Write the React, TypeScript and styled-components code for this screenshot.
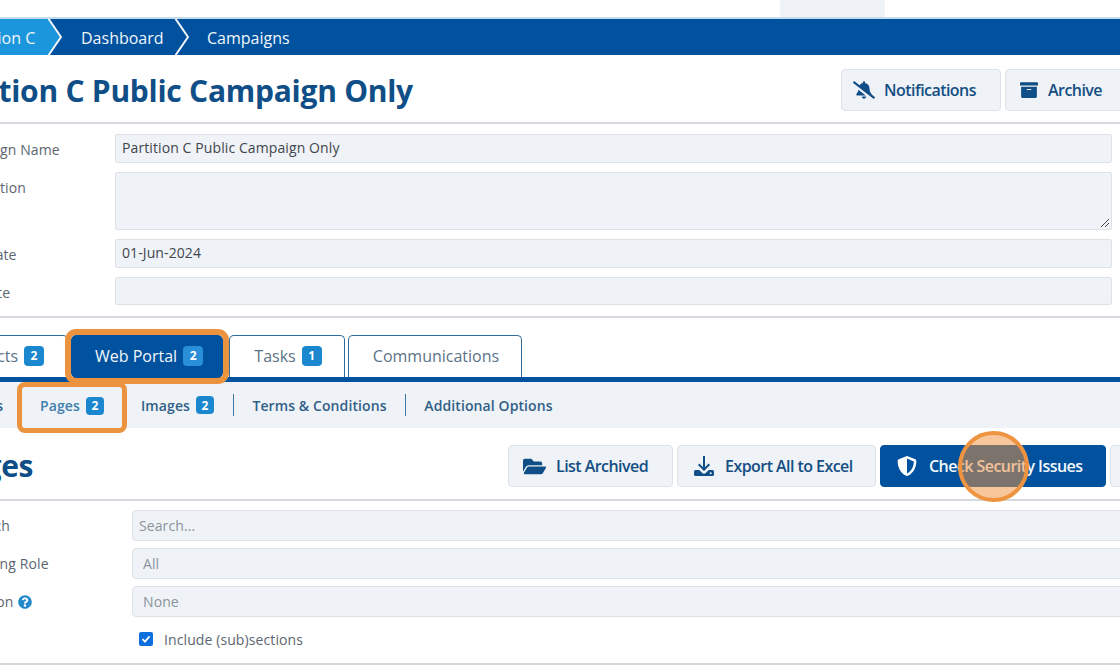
import React from 'react';
import styled, { createGlobalStyle } from 'styled-components';
import { FaArchive, FaBellSlash, FaFolderOpen, FaQuestionCircle, FaShieldAlt } from 'react-icons/fa';

const GlobalStyle = createGlobalStyle`
  html, body {
    margin: 0;
    padding: 0;
    background: #fff;
    overflow: hidden;
  }
  body {
    font-family: 'Open Sans', 'Liberation Sans', sans-serif;
    font-size: 14px;
    color: #495057;
  }
`;

const Viewport = styled.div`
  position: relative;
  width: 1120px;
  height: 668px;
  overflow: hidden;
`;

// the screenshot is scrolled sideways, so everything starts left of the window
const Page = styled.div`
  width: 1208px;
  margin-left: -73px;
`;

const TopBar = styled.div`
  height: 17px;
  padding-left: 853px;
`;

const TopBlock = styled.div`
  width: 105px;
  height: 17px;
  background: #eff2f6;
`;

const Breadcrumb = styled.nav`
  display: flex;
  align-items: stretch;
  height: 36px;
  border-top: 2px solid #c5dcec;
  background: #00529f;
`;

const Crumb = styled.span<{ $active?: boolean; $width: number; $inset: number }>`
  display: flex;
  align-items: center;
  width: ${(p) => p.$width}px;
  padding: 1px 0 0 ${(p) => p.$inset}px;
  box-sizing: border-box;
  background: ${(p) => (p.$active ? '#1b95dc' : 'transparent')};
  color: #f1f6fb;
  font-size: 16px;
  white-space: nowrap;
`;

const Chevron = styled.svg`
  display: block;
  flex: none;
  width: 14px;
  height: 36px;
`;

const PageHead = styled.div<{ $height: number }>`
  display: flex;
  align-items: flex-start;
  justify-content: space-between;
  height: ${(p) => p.$height}px;
  box-sizing: border-box;
  border-bottom: 2px solid #d5d9dd;
`;

const Title = styled.h1<{ $top: number; $left?: number }>`
  margin: ${(p) => p.$top}px 0 0 ${(p) => p.$left ?? 0}px;
  font-size: 30px;
  line-height: 38px;
  font-weight: 700;
  color: #0f4e86;
  letter-spacing: -0.26px;
  white-space: nowrap;
`;

const Actions = styled.div<{ $top: number }>`
  display: flex;
  gap: 4px;
  margin-top: ${(p) => p.$top}px;
`;

const ActionButton = styled.button<{ $primary?: boolean; $width: number; $pad?: number; $gap?: number }>`
  display: flex;
  align-items: center;
  gap: ${(p) => p.$gap ?? 10}px;
  width: ${(p) => p.$width}px;
  height: 42px;
  padding: 0 0 0 ${(p) => p.$pad ?? 14}px;
  box-sizing: border-box;
  border: 1px solid ${(p) => (p.$primary ? '#00529f' : '#dde2e8')};
  border-radius: 4px;
  background: ${(p) => (p.$primary ? '#00529f' : '#eff2f6')};
  color: ${(p) => (p.$primary ? '#f4f7fb' : '#144e84')};
  font-family: inherit;
  font-size: 16px;
  font-weight: 600;
  letter-spacing: -0.55px;
  white-space: nowrap;
  svg {
    flex: none;
    color: ${(p) => (p.$primary ? '#fff' : '#0f4e86')};
  }
`;

const Form = styled.div<{ $labelWidth: number; $right: number; $rowGap: number; $inset: number; $top: number }>`
  display: grid;
  grid-template-columns: ${(p) => p.$labelWidth}px ${(p) => p.$right}px;
  row-gap: ${(p) => p.$rowGap}px;
  align-items: start;
  padding-left: ${(p) => p.$inset}px;
  margin-top: ${(p) => p.$top}px;
`;

const Label = styled.label`
  display: flex;
  align-items: center;
  gap: 5px;
  height: 28px;
  padding-top: 3px;
  box-sizing: border-box;
  color: #5c6670;
  font-size: 14px;
  letter-spacing: 0.1px;
  white-space: nowrap;
  svg {
    color: #2389cb;
    font-size: 14px;
  }
`;

const Field = styled.div<{ $height: number; $muted?: boolean; $radius?: number; $pad?: number }>`
  position: relative;
  display: flex;
  align-items: center;
  height: ${(p) => p.$height}px;
  padding: 0 ${(p) => p.$pad ?? 6}px ${(p) => (p.$muted ? 0 : 2)}px;
  box-sizing: border-box;
  border: 1px solid #dee2e6;
  border-radius: ${(p) => p.$radius ?? 2}px;
  background: #eff2f6;
  color: ${(p) => (p.$muted ? '#8b949c' : '#3f464d')};
  font-size: 14px;
  letter-spacing: 0.1px;
`;

const Resize = styled.svg`
  position: absolute;
  right: 1px;
  bottom: 1px;
  width: 11px;
  height: 11px;
`;

const Divider = styled.div<{ $top: number }>`
  margin-top: ${(p) => p.$top}px;
  height: 2px;
  background: #d5d9dd;
`;

const Tabs = styled.div`
  display: flex;
  gap: 3px;
  height: 42px;
  margin-top: 17px;
`;

const Tab = styled.div<{ $active?: boolean; $width: number }>`
  position: relative;
  z-index: ${(p) => (p.$active ? 2 : 0)};
  display: flex;
  align-items: center;
  justify-content: center;
  gap: 6px;
  width: ${(p) => p.$width}px;
  height: ${(p) => (p.$active ? 43 : 42)}px;
  margin-right: ${(p) => (p.$active ? 3 : 0)}px;
  padding: 0 0 2px ${(p) => (p.$active ? 4 : 2)}px;
  box-sizing: border-box;
  border: 1px solid ${(p) => (p.$active ? '#00529f' : '#2f6d9f')};
  border-bottom: ${(p) => (p.$active ? '1px solid #00529f' : 'none')};
  border-radius: ${(p) => (p.$active ? '5px' : '5px 5px 0 0')};
  background: ${(p) => (p.$active ? '#00529f' : '#fff')};
  color: ${(p) => (p.$active ? '#f4f7fb' : '#5b7388')};
  font-size: 16px;
  outline: ${(p) => (p.$active ? '6px solid #ec9340' : 'none')};
  outline-offset: 0;
`;

const Count = styled.span<{ $small?: boolean; $soft?: boolean }>`
  display: inline-flex;
  align-items: center;
  justify-content: center;
  width: ${(p) => (p.$small ? 18 : 20)}px;
  height: ${(p) => (p.$small ? 18 : 20)}px;
  border-radius: 4px;
  background: ${(p) => (p.$soft ? '#2a8fd8' : '#1a87cf')};
  color: #fff;
  font-size: 12px;
  font-weight: 700;
`;

const SubNav = styled.div`
  position: relative;
  z-index: 1;
  display: flex;
  align-items: center;
  height: 51px;
  box-sizing: border-box;
  border-top: 5px solid #00529f;
  background: #eff2f6;
`;

const SubItem = styled.div<{ $width: number; $rule?: boolean }>`
  display: flex;
  align-items: center;
  justify-content: center;
  gap: 6px;
  width: ${(p) => p.$width}px;
  height: 22px;
  box-sizing: border-box;
  border-right: ${(p) => (p.$rule ? '1px solid #3a7aa8' : 'none')};
  color: #2f5f88;
  font-size: 14px;
  font-weight: 600;
  letter-spacing: 0.1px;
  white-space: nowrap;
`;

const ActiveSubItem = styled(SubItem)`
  align-self: flex-end;
  height: 41px;
  padding-bottom: 4px;
  border-radius: 3px;
  color: #3e7fab;
  outline: 5px solid #ec9340;
`;

const CheckRow = styled.div`
  display: flex;
  align-items: center;
  gap: 11px;
  height: 30px;
  padding-left: 7px;
  color: #5c6670;
  font-size: 14px;
  letter-spacing: 0.1px;
`;

const CheckBox = styled.span`
  display: flex;
  align-items: center;
  justify-content: center;
  width: 14px;
  height: 14px;
  border-radius: 2px;
  background: #0d6fdc;
`;

const Spot = styled.div`
  position: absolute;
  left: 958px;
  top: 431px;
  width: 71px;
  height: 71px;
  box-sizing: border-box;
  border: 4px solid #ee9340;
  border-radius: 50%;
  background: rgba(240, 146, 64, 0.52);
`;

const ChevronSep = ({ fill }: { fill: string }) => (
  <Chevron viewBox="0 0 14 36">
    <polygon points="0,0 13,18 0,36" fill={fill} />
    <polyline points="0,-1 13,18 0,37" fill="none" stroke="#f1f6fb" strokeWidth="2" />
  </Chevron>
);

const DownloadIcon = () => (
  <svg width="22" height="22" viewBox="0 0 22 22" fill="#0f4e86">
    <path d="M10 1h2v11.2l3.6-3.6 1.4 1.4-6 6-6-6 1.4-1.4 3.6 3.6z" />
    <path d="M2.5 15h3.7l2.6 2.6a3 3 0 0 0 4.4 0l2.6-2.6h3.7A1.5 1.5 0 0 1 21 16.5v3a1.5 1.5 0 0 1-1.5 1.5h-17A1.5 1.5 0 0 1 1 19.500v-3A1.500 1.500 0 0 1 2.500 15z" />
    <circle cx="17.700" cy="18.200" r="1" fill="#eff2f6" />
  </svg>
);

export default function App() {
  return (
    <Viewport>
      <GlobalStyle />
      <Page>
        <TopBar>
          <TopBlock />
        </TopBar>
        <Breadcrumb>
          <Crumb $active $width={121} $inset={30}>Partition C</Crumb>
          <ChevronSep fill="#1b95dc" />
          <Crumb $width={113} $inset={19}>Dashboard</Crumb>
          <ChevronSep fill="#00529f" />
          <Crumb $width={200} $inset={18}>Campaigns</Crumb>
        </Breadcrumb>

        <PageHead $height={69}>
          <Title $top={17}>Partition C Public Campaign Only</Title>
          <Actions $top={14}>
            <ActionButton $width={160} $pad={11} $gap={9}><FaBellSlash size={22} />Notifications</ActionButton>
            <ActionButton $width={130} $pad={14}><FaArchive size={18} />Archive</ActionButton>
          </Actions>
        </PageHead>

        <Form $labelWidth={165} $right={997} $rowGap={9} $inset={23} $top={10}>
          <Label>Campaign Name</Label>
          <Field $height={29}>Partition C Public Campaign Only</Field>
          <Label>Description</Label>
          <Field $height={58}>
            <Resize viewBox="0 0 11 11">
              <path d="M10 2 2 10M10 6 6 10" stroke="#444" strokeWidth="1" fill="none" />
            </Resize>
          </Field>
          <Label>Start Date</Label>
          <Field $height={29}>01-Jun-2024</Field>
          <Label>End Date</Label>
          <Field $height={28} />
        </Form>
        <Divider $top={11} />

        <Tabs>
          <Tab $width={141}>Contacts <Count>2</Count></Tab>
          <Tab $active $width={152}>Web Portal <Count $soft>2</Count></Tab>
          <Tab $width={116}>Tasks <Count>1</Count></Tab>
          <Tab $width={174}>Communications</Tab>
        </Tabs>
        <SubNav>
          <SubItem $width={95}>Sections</SubItem>
          <ActiveSubItem $width={100}>Pages <Count $small>2</Count></ActiveSubItem>
          <SubItem $width={112} $rule>Images <Count $small>2</Count></SubItem>
          <SubItem $width={172} $rule>Terms &amp; Conditions</SubItem>
          <SubItem $width={165}>Additional Options</SubItem>
        </SubNav>

        <PageHead $height={73}>
          <Title $top={19} $left={21}>Pages</Title>
          <Actions $top={17}>
            <ActionButton $width={165} $pad={14}><FaFolderOpen size={23} />List Archived</ActionButton>
            <ActionButton $width={199} $pad={15}><DownloadIcon />Export All to Excel</ActionButton>
            <ActionButton $primary $width={226} $pad={16} $gap={12}><FaShieldAlt size={20} />Check Security Issues</ActionButton>
            <ActionButton $width={25} />
          </Actions>
        </PageHead>

        <Form $labelWidth={167} $right={1100} $rowGap={7} $inset={38} $top={9}>
          <Label>Search</Label>
          <Field $height={31} $muted $radius={4}>Search...</Field>
          <Label>Viewing Role</Label>
          <Field $height={31} $muted $radius={4} $pad={10}>All</Field>
          <Label>Section <FaQuestionCircle /></Label>
          <Field $height={31} $muted $radius={4} $pad={10}>None</Field>
          <span />
          <CheckRow>
            <CheckBox>
              <svg width="10" height="10" viewBox="0 0 10 10">
                <path d="M1.5 5.2 4 7.6 8.5 2.4" fill="none" stroke="#fff" strokeWidth="1.8" />
              </svg>
            </CheckBox>
            Include (sub)sections
          </CheckRow>
        </Form>
        <Divider $top={9} />
      </Page>
      <Spot />
    </Viewport>
  );
}
